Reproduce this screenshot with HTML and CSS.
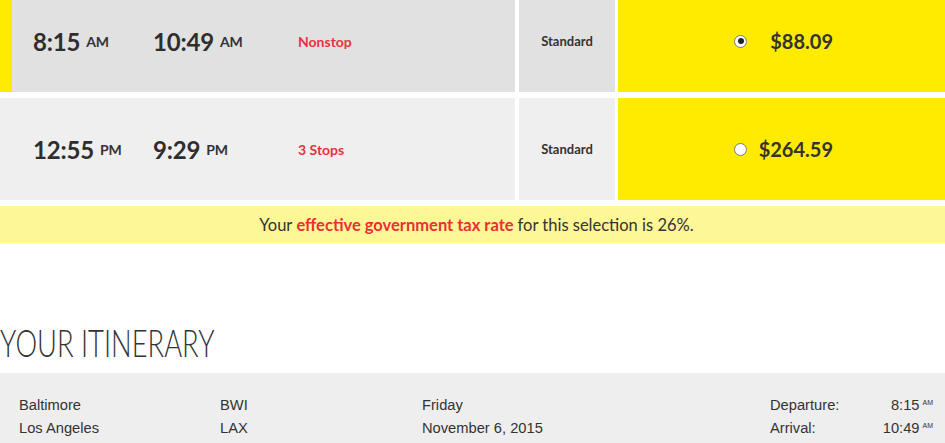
FILE: index.html
```html
<!DOCTYPE html>
<html lang="en">
<head>
<meta charset="utf-8">
<title>Select flight</title>
<link rel="stylesheet" href="styles.css">
</head>
<body>
<div class="flights">
  <div class="flight flight--selected">
    <div class="flight__main">
      <div class="time time--depart"><span class="time__clock">8:15</span><span class="time__ampm">AM</span></div>
      <div class="time time--arrive"><span class="time__clock">10:49</span><span class="time__ampm">AM</span></div>
      <div class="stops">Nonstop</div>
    </div>
    <div class="flight__fare">Standard</div>
    <div class="flight__price">
      <label class="price">
        <span class="radio radio--checked"></span>
        <span class="price__amount">$88.09</span>
      </label>
    </div>
  </div>
  <div class="flight">
    <div class="flight__main">
      <div class="time time--depart"><span class="time__clock">12:55</span><span class="time__ampm">PM</span></div>
      <div class="time time--arrive"><span class="time__clock">9:29</span><span class="time__ampm">PM</span></div>
      <div class="stops">3 Stops</div>
    </div>
    <div class="flight__fare">Standard</div>
    <div class="flight__price">
      <label class="price">
        <span class="radio"></span>
        <span class="price__amount">$264.59</span>
      </label>
    </div>
  </div>
</div>

<div class="taxbar">Your <strong>effective government tax rate</strong> for this selection is 26%.</div>

<h2 class="heading">YOUR ITINERARY</h2>

<div class="itinerary">
  <div class="itinerary__col">
    <div>Baltimore</div>
    <div>Los Angeles</div>
  </div>
  <div class="itinerary__col">
    <div>BWI</div>
    <div>LAX</div>
  </div>
  <div class="itinerary__col">
    <div>Friday</div>
    <div>November 6, 2015</div>
  </div>
  <div class="itinerary__col">
    <div class="itinerary__time"><span>Departure:</span><span>8:15<sup>AM</sup></span></div>
    <div class="itinerary__time"><span>Arrival:</span><span>10:49<sup>AM</sup></span></div>
  </div>
</div>
</body>
</html>
```

FILE: styles.css
```css
html, body {
  margin: 0;
  padding: 0;
  background: #fff;
  overflow: hidden;
}

body {
  font-family: "Lato", "Open Sans", sans-serif;
  color: #333;
}

/* flight list */
.flights {
  display: flex;
  flex-direction: column;
  gap: 6px;
  margin-top: -10px;
}

.flight {
  display: flex;
  height: 102px;
}

.flight__main {
  width: 515px;
  display: flex;
  align-items: center;
  padding-left: 33px;
  box-sizing: border-box;
  background: #efefef;
}

.flight__fare {
  width: 96px;
  margin-left: 4px;
  display: flex;
  align-items: center;
  justify-content: center;
  background: #efefef;
  font-size: 13px;
  font-weight: 700;
  color: #333;
}

.flight__price {
  flex: 1;
  margin-left: 3px;
  display: flex;
  align-items: center;
  justify-content: center;
  padding-left: 4px;
  background: #ffeb00;
}

.flight--selected .flight__main,
.flight--selected .flight__fare {
  background: #e1e1e1;
}

.flight--selected .flight__main {
  box-shadow: inset 12px 0 0 #ffeb00;
}

.time {
  display: flex;
  align-items: center;
}

.time--depart { width: 120px; }
.time--arrive { width: 145px; }

.time__clock {
  font-size: 24px;
  font-weight: 700;
  color: #2e2e2e;
  letter-spacing: -0.2px;
}

.time__ampm {
  margin-left: 6px;
  font-size: 14px;
  font-weight: 700;
  color: #333;
}

.stops {
  font-size: 14px;
  font-weight: 700;
  color: #e8313f;
}

.price {
  width: 99px;
  display: flex;
  align-items: center;
  justify-content: space-between;
}

.radio {
  width: 11px;
  height: 11px;
  border: 1px solid #7a7a7a;
  border-radius: 50%;
  background: #fff;
  display: flex;
  align-items: center;
  justify-content: center;
}

.radio--checked::after {
  content: "";
  width: 6px;
  height: 6px;
  border-radius: 50%;
  background: #222;
}

.price__amount {
  font-size: 20px;
  font-weight: 700;
  color: #333;
}

/* tax notice */
.taxbar {
  margin-top: 6px;
  height: 37px;
  display: flex;
  align-items: center;
  justify-content: center;
  padding-left: 8px;
  background: #fdf796;
  font-size: 16.5px;
  color: #333;
}

.taxbar strong {
  font-weight: 700;
  color: #ea2f36;
  margin: 0 4px;
}

/* itinerary */
.heading {
  margin: 80px 0 12px;
  font-size: 38px;
  line-height: 38px;
  font-weight: 300;
  color: #333;
  white-space: nowrap;
  transform: scaleX(0.72);
  transform-origin: left center;
}

.itinerary {
  display: grid;
  grid-template-columns: 201px 202px 1fr 163px;
  padding: 21px 12px 20px 19px;
  background: #eeeeee;
  font-family: "Liberation Sans", Arial, sans-serif;
  font-size: 14.7px;
  line-height: 23px;
  color: #333;
}

.itinerary__time {
  display: flex;
  justify-content: space-between;
}

.itinerary__time sup {
  font-size: 7px;
  margin-left: 3px;
  vertical-align: 5px;
  line-height: 0;
}
```
